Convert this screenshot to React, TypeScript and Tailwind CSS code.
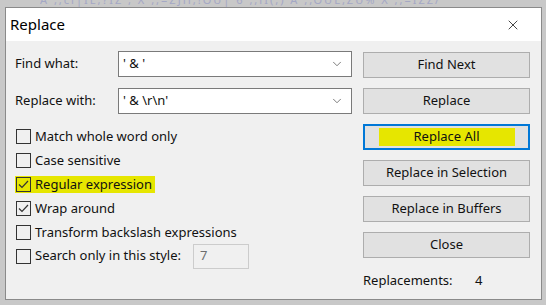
import { ChevronDown, X } from 'lucide-react';

const font = { fontFamily: '"Noto Sans", "Open Sans", sans-serif' };

function Combo({ value }: { value: string }) {
  return (
    <div className="flex items-center justify-between w-[234px] h-[26px] bg-white border border-[#7a7a7a] pl-[4px] pr-[7px]">
      <span className="text-[13px] text-[#111]">{value}</span>
      <ChevronDown size={14} strokeWidth={1.3} className="text-[#555]" />
    </div>
  );
}

function Check({ label, checked, highlight }: { label: string; checked?: boolean; highlight?: boolean }) {
  return (
    <div className="flex items-center h-[24px]">
      <div className={`flex items-center h-[17px] pl-[1px] pr-[3px] ${highlight ? 'bg-[#e6e600]' : ''}`}>
        <div className="w-[15px] h-[15px] border border-[#333] flex items-center justify-center">
          {checked && (
            <svg width="11" height="11" viewBox="0 0 11 11">
              <path d="M1 5.5 L4 8.5 L10 2" fill="none" stroke="#333" strokeWidth="1.2" />
            </svg>
          )}
        </div>
        <span className="ml-[4px] text-[13px] text-[#111] leading-none">{label}</span>
      </div>
    </div>
  );
}

function Btn({ label, primary }: { label: string; primary?: boolean }) {
  return (
    <div
      className={`w-[167px] h-[26px] flex items-center justify-center bg-[#e1e1e1] ${
        primary ? 'border-2 border-[#0078d7]' : 'border border-[#adadad]'
      }`}
    >
      {primary ? (
        <span className="bg-[#e6e600] w-[136px] h-[18px] flex items-center justify-center text-[13px] text-[#111]">
          {label}
        </span>
      ) : (
        <span className="text-[13px] text-[#111]">{label}</span>
      )}
    </div>
  );
}

export default function App() {
  return (
    <div className="w-[546px] h-[305px] bg-[#c8c8c8] overflow-hidden" style={font}>
      <div className="h-[7px] overflow-hidden pl-[40px]">
        <div className="-mt-[6px] text-[11px] leading-[12px] text-[#8d93c4] tracking-[2px] whitespace-nowrap opacity-60">
          A ,,cl|IL,?IZ ,  X  ,,=ZJH,!OU|  6  ,,lI(,)  A  ,,OUL,ZU%  X  ,,=IZZ/
        </div>
      </div>
      <div className="ml-[5px] w-[537px] h-[293px] border border-[#8a8a8a] bg-[#f0f0f0] flex flex-col">
        <div className="h-[33px] bg-white flex items-center justify-between pl-[4px] pr-[20px]">
          <span className="text-[15px] text-black">Replace</span>
          <X size={16} strokeWidth={1.1} className="text-black" />
        </div>
        <div className="flex pt-[10px]">
          <div className="w-[357px] pl-[9px]">
            <div className="flex items-center h-[26px]">
              <span className="w-[103px] text-[13px] text-[#111]">Find what:</span>
              <Combo value="' & '" />
            </div>
            <div className="flex items-center h-[26px] mt-[11px]">
              <span className="w-[103px] text-[13px] text-[#111]">Replace with:</span>
              <Combo value="' & \r\n'" />
            </div>
            <div className="mt-[10px] flex flex-col">
              <Check label="Match whole word only" />
              <Check label="Case sensitive" />
              <Check label="Regular expression" checked highlight />
              <Check label="Wrap around" checked />
              <Check label="Transform backslash expressions" />
              <div className="flex items-center h-[24px]">
                <div className="flex items-center pl-[1px]">
                  <div className="w-[15px] h-[15px] border border-[#333]" />
                  <span className="ml-[4px] text-[13px] text-[#111]">Search only in this style:</span>
                </div>
                <div className="ml-[12px] w-[56px] h-[25px] border border-[#cccccc] flex items-center pl-[6px] text-[13px] text-[#6d6d6d]">
                  7
                </div>
              </div>
            </div>
          </div>
          <div className="flex flex-col gap-[10px] pt-[1px]">
            <Btn label="Find Next" />
            <Btn label="Replace" />
            <Btn label="Replace All" primary />
            <Btn label="Replace in Selection" />
            <Btn label="Replace in Buffers" />
            <Btn label="Close" />
            <div className="flex mt-[3px] text-[13px] text-[#111]">
              <span className="w-[112px]">Replacements:</span>
              <span>4</span>
            </div>
          </div>
        </div>
      </div>
    </div>
  );
}
